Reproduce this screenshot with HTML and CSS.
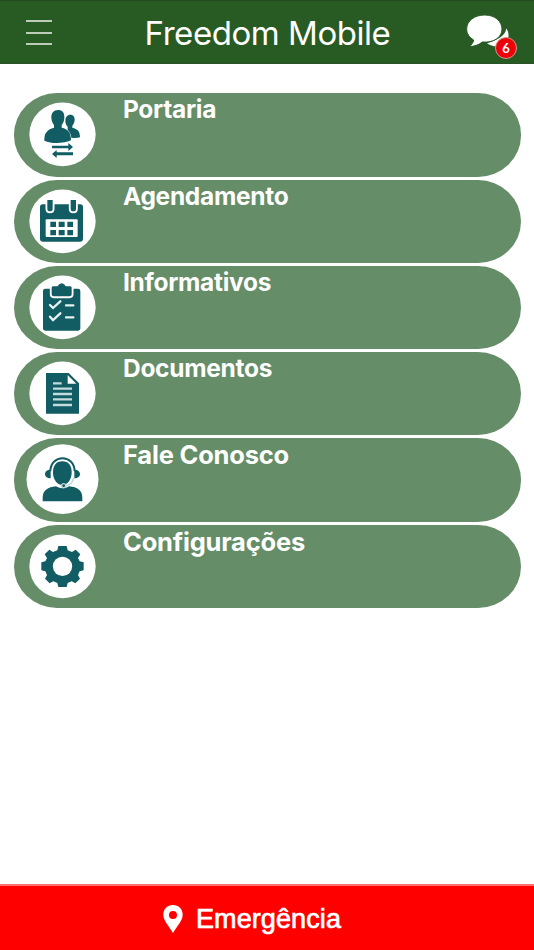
FILE: index.html
```html
<!DOCTYPE html>
<html lang="pt-BR">
<head>
    <meta charset="UTF-8">
    <meta name="viewport" content="width=device-width, initial-scale=1.0">
    <title>Freedom Mobile</title>
    <link rel="stylesheet" href="styles.css">
</head>
<body>
    <header class="topbar">
        <button type="button" class="menu-btn" aria-label="Menu">
            <span></span>
            <span></span>
            <span></span>
        </button>
        <h1 class="title">Freedom Mobile</h1>
        <button type="button" class="chat-btn" aria-label="Mensagens">
            <svg class="chat-icon" viewBox="0 0 129 102">
                <path d="M117 40C119 56 100 74 60 85C78 97 92 95 98 91C108 97 118 98 126 95L116 80C128 70 127 52 117 40Z"/>
                <path stroke="#285a23" stroke-width="3" d="M53 0C83 0 105 18 105 42C105 68 79 84 46 81C35 90 20 95 9 94C10 91 20 83 20 75C7 67-1 56-1 42C-1 18 22 0 53 0Z"/>
            </svg>
            <span class="badge">6</span>
        </button>
    </header>

    <main class="menu">
        <a class="item">
            <svg class="icon" viewBox="12 16 252 249">
                <ellipse class="disc" cx="157.500" cy="140" rx="99.500" ry="95.500"/>
                <path d="M181 81c9 0 14 7 13 17c-1 8-4 13-7 16v6c15 4 23 9 23 29c-10 3-25 3-37-1V117c-4-4-7-10-7-18c0-11 6-18 15-18z"/>
                <path class="cut" d="M144 67c13 0 20 8 19 24c-1 11-4 17-8 21v8c19 4 28 14 28 38c-23 10-58 11-80 1c-1-24 10-34 29-39v-8c-4-5-7-11-8-21c-1-15 7-24 20-24z"/>
                <path d="M126 174h49v-8l14 12l-14 12v-8h-49zM189 194h-49v-7l-14 12l14 12v-8h49z"/>
            </svg>
            <span class="label">Portaria</span>
        </a>
        <a class="item">
            <svg class="icon" viewBox="12 14 252 249">
                <ellipse class="disc" cx="157.500" cy="138" rx="99.500" ry="95.500"/>
                <path d="M98 87h113q8 0 8 8v95q0 9-9 9H99q-9 0-9-9V95q0-8 8-8z"/>
                <rect class="hole" x="107" y="132" width="96" height="53" rx="3"/>
                <path class="clip" d="M112 74h16v26q0 8-8 8t-8-8zM182 74h16v26q0 8-8 8t-8-8z"/>
                <path d="M121 139h17v16h-17zM146 139h18v16h-18zM172 139h17v16h-17zM121 164h17v16h-17zM146 164h18v16h-18zM172 164h17v16h-17z"/>
            </svg>
            <span class="label">Agendamento</span>
        </a>
        <a class="item">
            <svg class="icon" viewBox="12 12 252 249">
                <ellipse class="disc" cx="157.500" cy="136" rx="99.500" ry="95.500"/>
                <rect x="99" y="80" width="112" height="126" rx="7"/>
                <path class="clip" d="M125 77q0-4 5-4h10q5 0 6-5q9-9 18 0q1 5 6 5h10q5 0 5 4v20q0 6-6 6h-48q-6 0-6-6z"/>
                <path class="line" d="M120 129l9 9l22-20M120 164l9 10l22-20M168 130h22M168 166h22"/>
            </svg>
            <span class="label">Informativos</span>
        </a>
        <a class="item">
            <svg class="icon" viewBox="12 13 252 249">
                <ellipse class="disc" cx="157.500" cy="137" rx="99.500" ry="95.500"/>
                <path d="M108 76h68l31 31v91h-99z"/>
                <path class="hole" d="M173 82l26 26h-26z"/>
                <path class="rule" d="M129 107h26M129 123h57M129 139h57M129 155h57M129 172h57"/>
            </svg>
            <span class="label">Documentos</span>
        </a>
        <a class="item">
            <svg class="icon" viewBox="12 14 252 249">
                <ellipse class="disc" cx="157.500" cy="137.500" rx="108" ry="104.500"/>
                <path d="M98 204v-11c0-22 16-32 40-34q20 12 40 0c24 2 39 12 39 34v11z"/>
                <path d="M122 109c-11 0-17 6-17 13s6 13 17 13zM193 109c11 0 17 6 17 13s-6 13-17 13z"/>
                <path class="band" d="M121 114c1-52 72-52 73 0"/>
                <path d="M157 84c19 0 29 14 28 35c-1 20-12 36-28 36s-27-16-28-36c-1-21 9-35 28-35z"/>
                <path class="mic" d="M191 133q-3 22-24 24"/>
                <circle class="mic" cx="161" cy="157" r="6"/>
            </svg>
            <span class="label label-wide">Fale Conosco</span>
        </a>
        <a class="item">
            <svg class="icon" viewBox="12 15 252 249">
                <ellipse class="disc" cx="157.500" cy="139" rx="99.500" ry="95.500"/>
                <path d="M145 78h25l3 13l13 5l11-7l14 14l-7 11l5 10l12 3v24l-12 3l-5 11l6 11l-14 14l-11-6l-12 5l-3 12h-25l-3-12l-12-5l-11 6l-14-14l6-11l-5-11l-12-3v-24l12-3l5-10l-7-11l14-14l11 7l13-5z"/>
                <circle class="hole" cx="157.500" cy="139" r="29"/>
            </svg>
            <span class="label label-wide">Configurações</span>
        </a>
    </main>

    <button type="button" class="emergency">
        <svg class="pin" viewBox="0 0 60 84">
            <path fill-rule="evenodd" d="M30 0C47 0 59 12 59 29C59 47 44 60 30 84C16 60 1 47 1 29C1 12 13 0 30 0ZM30 18A12 12 0 1 0 30 42A12 12 0 1 0 30 18Z"/>
        </svg>
        <span>Emergência</span>
    </button>
</body>
</html>
```
FILE: styles.css
```css
* {
    box-sizing: border-box;
}
body {
    margin: 0;
    height: 950px;
    display: flex;
    flex-direction: column;
    background: white;
    font-family: Inter, "Liberation Sans", sans-serif;
    overflow: hidden;
}
button {
    padding: 0;
    border: none;
    background: none;
    color: white;
    cursor: pointer;
}
.topbar {
    display: flex;
    justify-content: space-between;
    align-items: center;
    height: 64px;
    padding: 2px 17px 0 26px;
    background: #285a23;
    border-top: 1px solid #24491f;
    border-bottom: 1px solid #2b5127;
}
.menu-btn {
    width: 50px;
    height: 25px;
    margin-top: -1px;
    display: flex;
    flex-direction: column;
    justify-content: space-between;
}
.menu-btn span {
    width: 26px;
    height: 2px;
    background: #bdccba;
}
.title {
    margin: 0 8px 0 0;
    color: white;
    font-size: 33px;
    font-weight: 400;
    line-height: 40px;
    letter-spacing: -0.45px;
    white-space: nowrap;
}
.chat-btn {
    position: relative;
    width: 50px;
    height: 46px;
}
.chat-icon {
    display: block;
    width: 43px;
    height: 34px;
    margin-top: -3px;
    fill: white;
    overflow: visible;
}
.badge {
    position: absolute;
    right: 0;
    bottom: -3px;
    width: 22px;
    height: 22px;
    border: 1px solid #c99a90;
    border-radius: 50%;
    background: #ee0008;
    font: bold 13px/20px Lato, sans-serif;
    text-align: center;
}
.menu {
    flex: 1;
    display: flex;
    flex-direction: column;
    gap: 3px;
    padding: 29.3px 13px 0 14px;
}
.item {
    display: flex;
    height: 83.3px;
    border-radius: 43px / 41.6px;
    background: #658d68;
    color: white;
}
.icon {
    width: 84px;
    height: 83px;
    fill: #115d63;
    overflow: visible;
}
.icon .disc,
.icon .hole {
    fill: white;
}
.icon .cut {
    stroke: white;
    stroke-width: 4px;
    paint-order: stroke;
}
.icon .clip {
    stroke: white;
    stroke-width: 11px;
    paint-order: stroke;
}
.icon .line {
    fill: none;
    stroke: #e6f2f2;
    stroke-width: 7px;
    stroke-linecap: round;
}
.icon .rule {
    stroke: #c2dcdd;
    stroke-width: 7px;
}
.icon .band {
    fill: none;
    stroke: #115d63;
    stroke-width: 6px;
}
.icon .mic {
    fill: #115d63;
    stroke: #b9d5d6;
    stroke-width: 4px;
}
.icon path.mic {
    fill: none;
}
.label {
    margin-left: 25px;
    font-size: 24.5px;
    font-weight: 700;
    line-height: 33px;
    letter-spacing: -0.3px;
}
.label-wide {
    font-size: 25.5px;
    letter-spacing: -0.2px;
}
.emergency {
    display: flex;
    justify-content: center;
    align-items: center;
    height: 66px;
    padding: 2px 30px 0 0;
    background: red;
    border-top: 2px solid #ff7070;
    font: 27px "Liberation Sans", Arial, sans-serif;
    letter-spacing: 0.1px;
    -webkit-text-stroke: 0.7px white;
}
.pin {
    width: 20px;
    height: 28px;
    margin-right: 13px;
    fill: white;
}
```
